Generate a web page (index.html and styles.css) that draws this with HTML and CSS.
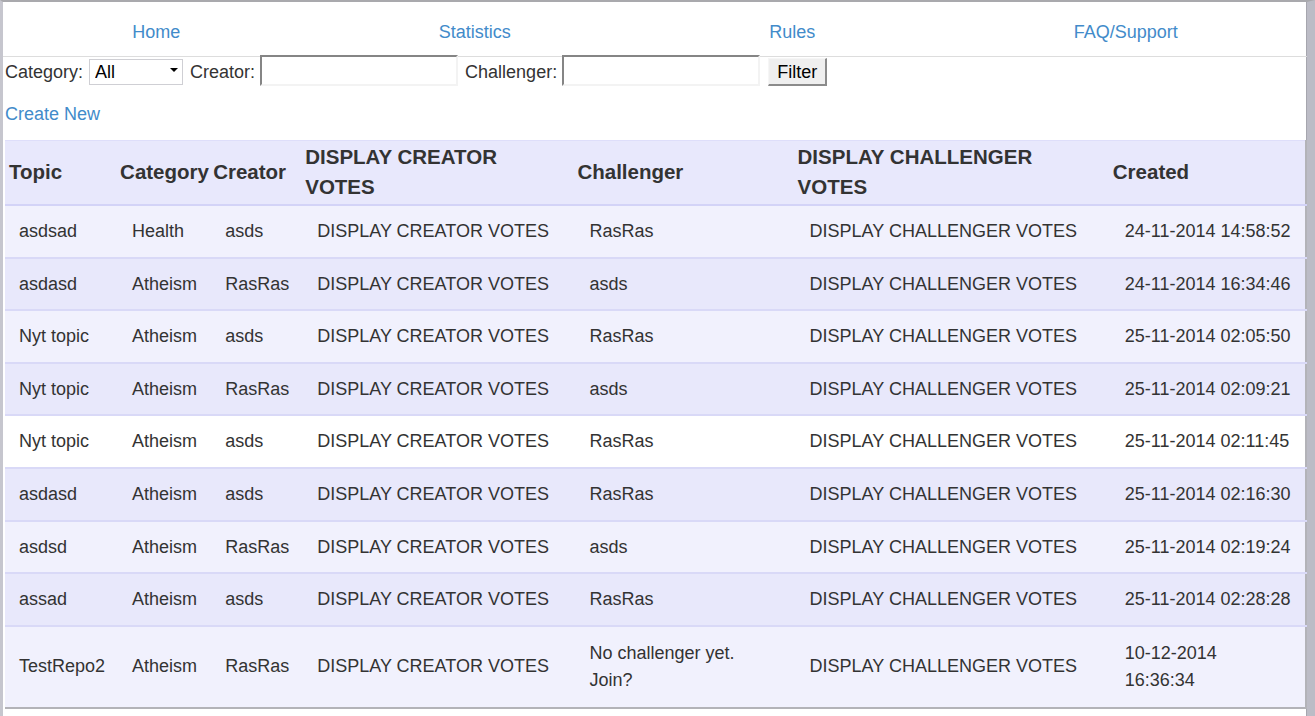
FILE: index.html
```html
<!DOCTYPE html>
<html lang="en">
<head>
<meta charset="utf-8">
<title>Debates</title>
<link rel="stylesheet" href="styles.css">
</head>
<body>
<div class="frame">
  <nav class="nav">
    <a class="nav-link" href="#">Home</a>
    <a class="nav-link" href="#">Statistics</a>
    <a class="nav-link" href="#">Rules</a>
    <a class="nav-link" href="#">FAQ/Support</a>
  </nav>
  <form class="filters">
    <label class="label">Category:</label>
    <span class="select-wrap"><select class="select"><option>All</option><option>Health</option><option>Atheism</option></select></span>
    <label class="label">Creator:</label>
    <input class="text-input" type="text">
    <label class="label">Challenger:</label>
    <input class="text-input" type="text">
    <button class="btn" type="button">Filter</button>
  </form>
  <div class="create"><a class="link" href="#">Create New</a></div>
  <table class="grid">
    <colgroup>
      <col class="c-topic"><col class="c-cat"><col class="c-creator"><col class="c-cvotes"><col class="c-chal"><col class="c-chvotes"><col class="c-created">
    </colgroup>
    <thead>
      <tr><th>Topic</th><th>Category</th><th>Creator</th><th class="th-wrap">DISPLAY CREATOR VOTES</th><th>Challenger</th><th class="th-wrap">DISPLAY CHALLENGER VOTES</th><th>Created</th></tr>
    </thead>
    <tbody>
      <tr class="odd"><td>asdsad</td><td>Health</td><td>asds</td><td>DISPLAY CREATOR VOTES</td><td>RasRas</td><td>DISPLAY CHALLENGER VOTES</td><td class="nowrap">24-11-2014 14:58:52</td></tr>
      <tr class="even"><td>asdasd</td><td>Atheism</td><td>RasRas</td><td>DISPLAY CREATOR VOTES</td><td>asds</td><td>DISPLAY CHALLENGER VOTES</td><td class="nowrap">24-11-2014 16:34:46</td></tr>
      <tr class="odd"><td>Nyt topic</td><td>Atheism</td><td>asds</td><td>DISPLAY CREATOR VOTES</td><td>RasRas</td><td>DISPLAY CHALLENGER VOTES</td><td class="nowrap">25-11-2014 02:05:50</td></tr>
      <tr class="even"><td>Nyt topic</td><td>Atheism</td><td>RasRas</td><td>DISPLAY CREATOR VOTES</td><td>asds</td><td>DISPLAY CHALLENGER VOTES</td><td class="nowrap">25-11-2014 02:09:21</td></tr>
      <tr class="hover"><td>Nyt topic</td><td>Atheism</td><td>asds</td><td>DISPLAY CREATOR VOTES</td><td>RasRas</td><td>DISPLAY CHALLENGER VOTES</td><td class="nowrap">25-11-2014 02:11:45</td></tr>
      <tr class="even"><td>asdasd</td><td>Atheism</td><td>asds</td><td>DISPLAY CREATOR VOTES</td><td>RasRas</td><td>DISPLAY CHALLENGER VOTES</td><td class="nowrap">25-11-2014 02:16:30</td></tr>
      <tr class="odd"><td>asdsd</td><td>Atheism</td><td>RasRas</td><td>DISPLAY CREATOR VOTES</td><td>asds</td><td>DISPLAY CHALLENGER VOTES</td><td class="nowrap">25-11-2014 02:19:24</td></tr>
      <tr class="even"><td>assad</td><td>Atheism</td><td>asds</td><td>DISPLAY CREATOR VOTES</td><td>RasRas</td><td>DISPLAY CHALLENGER VOTES</td><td class="nowrap">25-11-2014 02:28:28</td></tr>
      <tr class="odd"><td>TestRepo2</td><td>Atheism</td><td>RasRas</td><td>DISPLAY CREATOR VOTES</td><td>No challenger yet. Join?</td><td>DISPLAY CHALLENGER VOTES</td><td>10-12-2014<br>16:36:34</td></tr>
    </tbody>
  </table>
</div>
</body>
</html>
```
FILE: styles.css
```css
html, body {
  margin: 0;
  padding: 0;
  background: #ffffff;
}
body {
  font-family: "Liberation Sans", Arial, sans-serif;
  font-size: 18px;
  color: #333333;
  height: 716px;
  overflow: hidden;
}
.frame {
  box-sizing: border-box;
  height: 716px;
  border-top: 2px solid #a9a9ad;
  border-left: 3px solid #c6c6ce;
  border-right: 8px solid #bcbcc6;
  box-shadow: inset -1px 0 0 #a6a6ae;
}
.nav {
  display: flex;
  padding: 20px 0 14px;
  line-height: 20px;
  border-bottom: 1px solid #dddddd;
}
.nav-link {
  flex: 1 1 auto;
  text-align: center;
  color: #428bca;
  text-decoration: none;
}
.link {
  color: #428bca;
  text-decoration: none;
}
.filters {
  display: flex;
  align-items: center;
  height: 31px;
  margin: -2px 0 0;
  padding-left: 2px;
}
.label {
  line-height: 20px;
  padding-top: 3px;
  margin-right: 6px;
}
.select-wrap {
  position: relative;
  display: inline-block;
  margin-right: 7px;
}
.select-wrap::after {
  content: "";
  position: absolute;
  right: 5px;
  top: 12px;
  border-left: 4px solid transparent;
  border-right: 4px solid transparent;
  border-top: 4px solid #000000;
  pointer-events: none;
}
.select {
  appearance: none;
  -webkit-appearance: none;
  box-sizing: border-box;
  width: 94px;
  height: 26px;
  margin: 3px 0 0;
  padding: 0 0 0 5px;
  border: 1px solid #cfcfd4;
  border-radius: 0;
  background: #ffffff;
  font-family: "Liberation Sans", Arial, sans-serif;
  font-size: 18px;
  color: #000000;
}
.text-input {
  box-sizing: border-box;
  width: 198px;
  height: 31px;
  margin: 0 7px 0 -1px;
  padding: 0 4px;
  border-top: 2px solid #858585;
  border-left: 2px solid #858585;
  border-right: 2px solid #f3f3f3;
  border-bottom: 2px solid #f3f3f3;
  background: #ffffff;
  font-family: "Liberation Sans", Arial, sans-serif;
  font-size: 18px;
}
.btn {
  box-sizing: border-box;
  width: 59px;
  height: 28px;
  margin: 3px 0 0 1px;
  padding: 0;
  background: #efefef;
  border-style: solid;
  border-width: 1px 2px 2px 1px;
  border-color: #f6f6f6 #8b8b8b #8b8b8b #f6f6f6;
  font-family: "Liberation Sans", Arial, sans-serif;
  font-size: 18px;
  color: #000000;
  line-height: 22px;
}
.create {
  margin-top: 18px;
  padding-left: 2px;
  line-height: 20px;
}
.grid {
  table-layout: fixed;
  width: 1302px;
  margin: 16px 0 0 2px;
  border-collapse: collapse;
  border-right: 2px solid #b3b3b8;
  border-bottom: 2px solid #b3b3b8;
}
.c-topic { width: 112px; }
.c-cat { width: 93px; }
.c-creator { width: 92px; }
.c-cvotes { width: 272px; }
.c-chal { width: 220px; }
.c-chvotes { width: 315px; }
.c-created { width: 196px; }
.grid thead tr {
  background: #e8e8fc;
}
.grid th {
  padding: 1px 0 2px 3px;
  font-size: 20.5px;
  font-weight: bold;
  line-height: 30px;
  text-align: left;
  vertical-align: middle;
  border-top: 1px solid #dedefa;
  border-bottom: 2px solid #d3d3f7;
}
.grid th:first-child {
  padding-left: 4px;
}
.grid th.th-wrap {
  padding-right: 14px;
}
.grid td {
  padding: 12px 15px 11.6px 15px;
  line-height: 27px;
  vertical-align: middle;
  border-bottom: 2px solid #d9d9f7;
}
.grid td:first-child {
  padding-left: 14px;
}
.grid tbody tr:last-child td {
  border-bottom: none;
  padding-top: 13px;
  padding-bottom: 13px;
}
.odd { background: #f1f1fd; }
.even { background: #e8e8fb; }
.hover { background: #ffffff; }
.nowrap { white-space: nowrap; }
```
